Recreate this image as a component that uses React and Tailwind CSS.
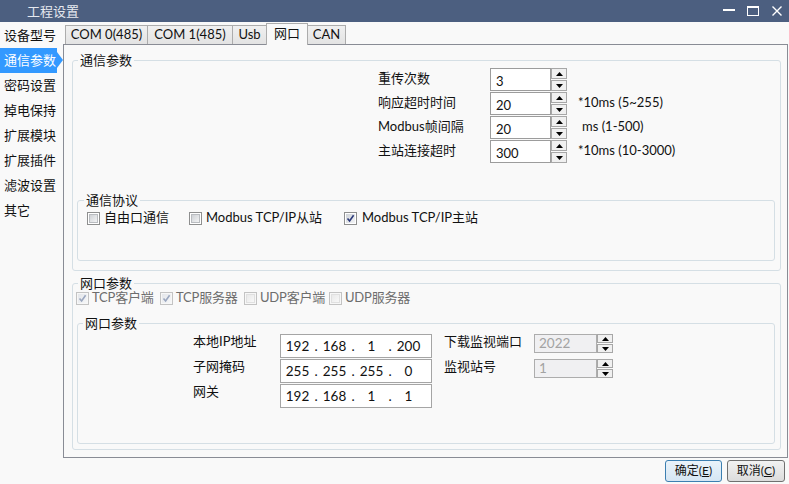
import React from "react";

function Arrow({ dir, color = "#000" }) {
  return (
    <svg width="7" height="4" viewBox="0 0 7 4">
      {dir === "up" ? (
        <path d="M0 4 L3.5 0 L7 4 Z" fill={color} />
      ) : (
        <path d="M0 0 L3.5 4 L7 0 Z" fill={color} />
      )}
    </svg>
  );
}

function Spin({ small }) {
  return (
    <div className={small ? "flex flex-col gap-px w-[16px] h-[19px]" : "flex flex-col gap-px w-[16px] h-[23px]"}>
      <div className="flex-1 border border-[#a7a7a7] bg-[#f0f0f0] flex items-center justify-center">
        <Arrow dir="up" />
      </div>
      <div className="flex-1 border border-[#a7a7a7] bg-[#f0f0f0] flex items-center justify-center">
        <Arrow dir="down" />
      </div>
    </div>
  );
}

function Check({ checked, disabled }) {
  return (
    <span
      className={
        disabled
          ? "w-[13px] h-[13px] border border-[#c3c3c3] bg-[#f7f7f7] flex items-center justify-center shrink-0"
          : "w-[13px] h-[13px] border border-[#8e8f8f] bg-white flex items-center justify-center shrink-0"
      }
    >
      {checked ? (
        <span
          className={
            disabled
              ? "w-[9px] h-[9px] bg-gradient-to-br from-[#e4e6ea] to-[#f6f7f8] flex items-center justify-center"
              : "w-[9px] h-[9px] bg-gradient-to-br from-[#cfd3d8] to-[#f3f4f6] flex items-center justify-center"
          }
        >
          <svg width="9" height="9" viewBox="0 0 9 9">
            <path
              d="M1.5 4.5 L3.6 7 L7.6 1.2"
              fill="none"
              stroke={disabled ? "#9ba7bf" : "#2c3a7a"}
              strokeWidth="1.6"
            />
          </svg>
        </span>
      ) : (
        <span
          className={
            disabled
              ? "w-[9px] h-[9px] border border-[#e0e0e0] bg-gradient-to-br from-[#e9e9e9] to-[#f8f8f8]"
              : "w-[9px] h-[9px] border border-[#b9bcc0] bg-gradient-to-br from-[#cfd2d6] to-[#f2f3f4]"
          }
        />
      )}
    </span>
  );
}

function IpBox({ parts }) {
  return (
    <div className="w-[152px] h-[24px] border border-[#a5a5a5] bg-white flex items-center pl-[3px] text-[13.5px]">
      {parts.map((p, i) => (
        <React.Fragment key={i}>
          <span className="w-[27px] text-center">{p}</span>
          {i < 3 && <span className="w-[10px] text-center">.</span>}
        </React.Fragment>
      ))}
    </div>
  );
}

export default function App() {
  const nav = ["设备型号", "通信参数", "密码设置", "掉电保持", "扩展模块", "扩展插件", "滤波设置", "其它"];
  const rows = [
    { label: "重传次数", value: "3", unit: "", pl: "" },
    { label: "响应超时时间", value: "20", unit: "*10ms (5~255)", pl: "ml-[11px]" },
    { label: "Modbus帧间隔", value: "20", unit: "ms (1-500)", pl: "ml-[15px]" },
    { label: "主站连接超时", value: "300", unit: "*10ms (10-3000)", pl: "ml-[11px]" },
  ];
  const tabs = [
    { t: "COM 0(485)", w: "w-[83px]" },
    { t: "COM 1(485)", w: "w-[86px]" },
    { t: "Usb", w: "w-[35px]" },
    { t: "网口", w: "w-[42px]", sel: true },
    { t: "CAN", w: "w-[39px]" },
  ];

  return (
    <div className="w-[789px] h-[484px] bg-[#f9f9f9] flex flex-col overflow-hidden text-[13px] text-[#111] font-['Lato','Noto_Sans_CJK_SC',sans-serif]">
      {/* Title bar */}
      <div className="h-[22px] bg-[#4c5f80] flex items-center shrink-0">
        <span className="ml-[27px] text-[#e6e9ef] leading-[22px]">工程设置</span>
        <div className="ml-auto flex items-center mr-[7px]">
          <div className="w-[12px] h-[2px] bg-white mt-[-3px]" />
          <div className="ml-[12px] w-[12px] h-[10px] border border-white border-t-2" />
          <svg className="ml-[13px]" width="10" height="10" viewBox="0 0 10 10">
            <path d="M0.5 0.5 L9.5 9.5 M9.5 0.5 L0.5 9.5" stroke="white" strokeWidth="1.4" />
          </svg>
        </div>
      </div>

      <div className="flex flex-1">
        {/* Left nav */}
        <div className="w-[63px] flex flex-col pt-[1px] shrink-0">
          {nav.map((n, i) =>
            i === 1 ? (
              <div key={n} className="relative w-[57px] h-[25px] bg-[#3399ff] text-white flex items-center pl-[4px]">
                {n}
                <span className="absolute left-full top-[4px] w-0 h-0 border-y-[8px] border-y-transparent border-l-[6px] border-l-[#3399ff]" />
              </div>
            ) : (
              <div key={n} className="h-[25px] flex items-center pl-[4px]">
                {n}
              </div>
            )
          )}
        </div>

        {/* Main */}
        <div className="flex flex-col w-[726px]">
          {/* Tabs */}
          <div className="h-[22px] flex items-end pl-[2px]">
            {tabs.map((tb, i) =>
              tb.sel ? (
                <div
                  key={tb.t}
                  className={`${tb.w} h-[22px] -ml-px mb-[-1px] relative z-10 border border-b-0 border-[#acacac] bg-[#f9f9f9] flex items-center justify-center pb-[2px]`}
                >
                  {tb.t}
                </div>
              ) : (
                <div
                  key={tb.t}
                  className={
                    i === 0
                      ? `${tb.w} h-[19px] border border-b-0 border-[#acacac] bg-gradient-to-b from-[#f0f0f0] to-[#e3e3e3] flex items-center justify-center`
                      : `${tb.w} h-[19px] -ml-px border border-b-0 border-[#acacac] bg-gradient-to-b from-[#f0f0f0] to-[#e3e3e3] flex items-center justify-center`
                  }
                >
                  {tb.t}
                </div>
              )
            )}
          </div>

          {/* Panel */}
          <div className="w-[725px] h-[414px] border border-[#898c95] bg-[#f9f9f9] flex flex-col">
            {/* 通信参数 */}
            <fieldset className="ml-[8px] mt-[7px] w-[709px] border border-[#d5dfe5] rounded-[3px] pb-[9px]">
              <legend className="ml-[5px] px-[2px] leading-[16px]">通信参数</legend>
              <div className="ml-[305px] flex flex-col">
                {rows.map((r) => (
                  <div key={r.label} className="flex h-[24px]">
                    <div className="w-[112px] leading-[20px]">{r.label}</div>
                    <div className="w-[61px] h-[23px] border border-[#9c9c9c] bg-white pl-[5px] pt-[4px] leading-[16px]">
                      {r.value}
                    </div>
                    <Spin />
                    {r.unit && <div className={`${r.pl} leading-[20px]`}>{r.unit}</div>}
                  </div>
                ))}
              </div>

              {/* 通信协议 */}
              <fieldset className="ml-[4px] mt-[28px] w-[698px] border border-[#d5dfe5] rounded-[3px]">
                <legend className="ml-[6px] px-[2px] leading-[16px]">通信协议</legend>
                <div className="h-[52px]">
                  <div className="h-[20px] flex items-center ml-[9px]">
                    <div className="w-[102px] flex items-center gap-[4px]">
                      <Check />
                      <span>自由口通信</span>
                    </div>
                    <div className="w-[155px] flex items-center gap-[4px]">
                      <Check />
                      <span>Modbus TCP/IP从站</span>
                    </div>
                    <div className="flex items-center gap-[5px]">
                      <Check checked />
                      <span>Modbus TCP/IP主站</span>
                    </div>
                  </div>
                </div>
              </fieldset>
            </fieldset>

            {/* 网口参数 */}
            <fieldset className="ml-[8px] mt-[4px] w-[709px] border border-[#d5dfe5] rounded-[3px] pb-[5px]">
              <legend className="ml-[5px] px-[2px] leading-[16px]">网口参数</legend>
              <div className="h-[14px] flex items-center ml-[3px] text-[#6d6d6d]">
                <div className="w-[84px] flex items-center gap-[3px]">
                  <Check checked disabled />
                  <span className="tracking-[-0.2px]">TCP客户端</span>
                </div>
                <div className="w-[84px] flex items-center gap-[3px]">
                  <Check checked disabled />
                  <span className="tracking-[-0.2px]">TCP服务器</span>
                </div>
                <div className="w-[85px] flex items-center gap-[3px]">
                  <Check disabled />
                  <span className="tracking-[-0.2px]">UDP客户端</span>
                </div>
                <div className="flex items-center gap-[3px]">
                  <Check disabled />
                  <span className="tracking-[-0.2px]">UDP服务器</span>
                </div>
              </div>

              <fieldset className="ml-[4px] mt-[10px] w-[698px] border border-[#d5dfe5] rounded-[3px]">
                <legend className="ml-[5px] px-[2px] leading-[16px]">网口参数</legend>
                <div className="h-[112px] pt-[3px] ml-[115px] flex flex-col gap-px">
                  <div className="flex h-[24px]">
                    <div className="w-[87px] leading-[14px]">本地IP地址</div>
                    <IpBox parts={["192", "168", "1", "200"]} />
                    <div className="ml-[12px] w-[90px] leading-[14px]">下载监视端口</div>
                    <div className="w-[63px] h-[19px] border border-[#adadad] bg-[#f0f0f2] text-[#a3a3a3] pl-[4px] leading-[17px] text-[13.5px]">
                      2022
                    </div>
                    <Spin small />
                  </div>
                  <div className="flex h-[24px]">
                    <div className="w-[87px] leading-[14px]">子网掩码</div>
                    <IpBox parts={["255", "255", "255", "0"]} />
                    <div className="ml-[12px] w-[90px] leading-[14px]">监视站号</div>
                    <div className="w-[63px] h-[19px] border border-[#adadad] bg-[#f0f0f2] text-[#a3a3a3] pl-[4px] leading-[17px] text-[13.5px]">
                      1
                    </div>
                    <Spin small />
                  </div>
                  <div className="flex h-[24px]">
                    <div className="w-[87px] leading-[14px]">网关</div>
                    <IpBox parts={["192", "168", "1", "1"]} />
                  </div>
                </div>
              </fieldset>
            </fieldset>
          </div>

          {/* Buttons */}
          <div className="flex justify-end gap-[5px] pr-[4px] mt-[2px] text-[12px]">
            <div className="w-[57px] h-[22px] border border-[#3c7fb1] rounded-[3px] bg-gradient-to-b from-[#eaf3fa] to-[#d5e6f3] flex items-center justify-center">
              确定(<span className="underline">E</span>)
            </div>
            <div className="w-[58px] h-[22px] border border-[#707070] rounded-[3px] bg-gradient-to-b from-[#f2f2f2] to-[#dcdcdc] flex items-center justify-center">
              取消(<span className="underline">C</span>)
            </div>
          </div>
        </div>
      </div>
    </div>
  );
}
